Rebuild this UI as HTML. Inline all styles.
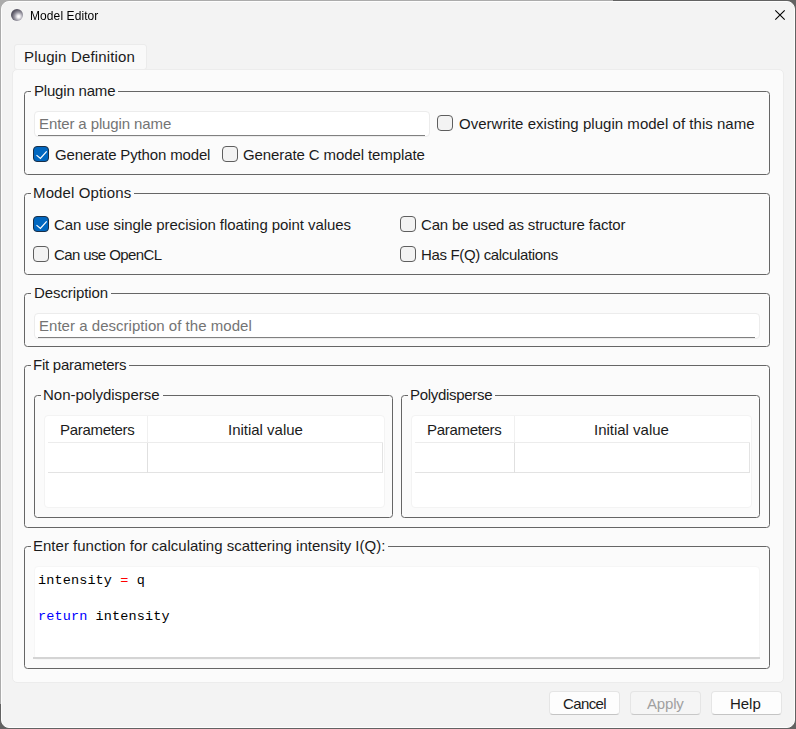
<!DOCTYPE html>
<html><head><meta charset="utf-8">
<style>
*{box-sizing:border-box;margin:0;padding:0}
html,body{width:796px;height:729px;overflow:hidden;background:#626262}
body{position:relative;font-family:"Liberation Sans",sans-serif;font-size:15px;color:#1b1b1b}
.a{position:absolute}
.t{position:absolute;white-space:nowrap;line-height:20px;font-size:15px}
#win{position:absolute;left:1px;top:1px;width:794px;height:727px;background:#f3f3f3;border-radius:8px;border:1px solid #fdfdfd}
#tab{left:14px;top:44px;width:133px;height:26px;background:#f9f9f9;border:1px solid #ebebeb;border-radius:3px}
#pane{left:12px;top:69px;width:772px;height:614px;background:#fbfbfb;border:1px solid #ececec;border-radius:5px}
.grp{position:absolute;border:1px solid #666666;border-radius:3.5px}
.gt{position:absolute;white-space:nowrap;line-height:20px;font-size:15px;background:#fbfbfb;padding:0 3px 0 3px}
.le{position:absolute;background:#fff;border:1px solid #ececec;border-radius:4px}
.ul{position:absolute;height:1px;background:#808080}
.ph{color:#747474}
.cb{position:absolute;width:16px;height:16px;border:1px solid #5e5e5e;border-radius:4px;background:#f3f3f3}
.cbc{position:absolute;width:16px;height:16px;border-radius:4px;background:#0067c0;border:1px solid #1a2f47}
.tbl{position:absolute;background:#fff;border:1px solid #f3f3f3;border-radius:4px}
.hl{position:absolute;height:1px;background:#e5e5e5}
.vl{position:absolute;width:1px;background:#e5e5e5}
.btn{position:absolute;height:24px;background:#fdfdfd;border:1px solid #e5e5e5;border-bottom-color:#c4c4c4;border-radius:4px;text-align:center;line-height:22px}
.mono{font-family:"Liberation Mono",monospace;font-size:13.5px;line-height:18px;color:#000;letter-spacing:0.13px}
</style></head>
<body>
<div class="a" style="left:0;top:0;width:613px;height:10px;background:#ababab"></div>
<div class="a" style="left:0;top:0;width:10px;height:704px;background:#ababab"></div>
<div id="win"></div>
<!-- title bar -->
<div class="a" style="left:11px;top:9px;width:12px;height:12px;border-radius:50%;background:radial-gradient(circle at 64% 63%,#ffffff 0%,#f0eef2 13%,#9c9aa5 38%,#5f5c6a 62%,#3a3746 92%)"></div>
<div class="t" style="left:30px;top:8px;font-size:12px;line-height:16px;color:#000;letter-spacing:0.09px;will-change:transform">Model Editor</div>
<svg class="a" style="left:770px;top:5px" width="20" height="20" viewBox="0 0 20 20"><path d="M5.3 5.3 L14.7 14.7 M14.7 5.3 L5.3 14.7" stroke="#000" stroke-width="1.1" fill="none"/></svg>

<div id="tab" class="a"></div>
<div class="t" style="left:24px;top:47px;letter-spacing:0.15px">Plugin Definition</div>
<div id="pane" class="a"></div>

<!-- Plugin name -->
<div class="grp" style="left:24px;top:91px;width:746px;height:84px"></div>
<div class="gt" style="left:31px;top:81px;padding-left:3px;letter-spacing:-0.19px">Plugin name</div>
<div class="le" style="left:34px;top:111px;width:396px;height:26px"></div>
<div class="ul" style="left:38px;top:135px;width:387px"></div>
<div class="t ph" style="left:39px;top:114px;letter-spacing:-0.11px">Enter a plugin name</div>
<div class="cb" style="left:437px;top:115px"></div>
<div class="t" style="left:459px;top:114px;letter-spacing:0.03px">Overwrite existing plugin model of this name</div>
<div class="cbc" style="left:33px;top:146px"></div><svg class="a" style="left:33px;top:146px" width="16" height="16" viewBox="0 0 16 16"><path d="M3.5 9.1 L7.4 12.4 L13.7 5.3" stroke="#fff" stroke-width="1.2" fill="none"/></svg>
<div class="t" style="left:55px;top:145px;letter-spacing:-0.15px">Generate Python model</div>
<div class="cb" style="left:222px;top:146px"></div>
<div class="t" style="left:243px;top:145px;letter-spacing:-0.1px">Generate C model template</div>

<!-- Model Options -->
<div class="grp" style="left:24px;top:193px;width:746px;height:82px"></div>
<div class="gt" style="left:31px;top:183px;padding-left:2px;letter-spacing:0.13px">Model Options</div>
<div class="cbc" style="left:33px;top:216px"></div><svg class="a" style="left:33px;top:216px" width="16" height="16" viewBox="0 0 16 16"><path d="M3.5 9.1 L7.4 12.4 L13.7 5.3" stroke="#fff" stroke-width="1.2" fill="none"/></svg>
<div class="t" style="left:54px;top:215px;letter-spacing:-0.07px">Can use single precision floating point values</div>
<div class="cb" style="left:33px;top:246px"></div>
<div class="t" style="left:54px;top:245px;letter-spacing:-0.61px">Can use OpenCL</div>
<div class="cb" style="left:400px;top:216px"></div>
<div class="t" style="left:421px;top:215px;letter-spacing:-0.16px">Can be used as structure factor</div>
<div class="cb" style="left:400px;top:246px"></div>
<div class="t" style="left:421px;top:245px;letter-spacing:-0.35px">Has F(Q) calculations</div>

<!-- Description -->
<div class="grp" style="left:24px;top:293px;width:746px;height:54px"></div>
<div class="gt" style="left:31px;top:283px;padding-left:3px;letter-spacing:-0.09px">Description</div>
<div class="le" style="left:34px;top:313px;width:726px;height:26px"></div>
<div class="ul" style="left:38px;top:337px;width:717px"></div>
<div class="t ph" style="left:39px;top:316px;letter-spacing:0.03px">Enter a description of the model</div>

<!-- Fit parameters -->
<div class="grp" style="left:24px;top:365px;width:746px;height:163px"></div>
<div class="gt" style="left:31px;top:355px;padding-left:2px;letter-spacing:-0.24px">Fit parameters</div>

<div class="grp" style="left:34px;top:395px;width:359px;height:123px"></div>
<div class="gt" style="left:41px;top:385px;padding-left:2px;letter-spacing:-0.01px">Non-polydisperse</div>
<div class="tbl" style="left:44px;top:415px;width:341px;height:93px"></div>
<div class="hl" style="left:48px;top:442px;width:335px;background:#ececec"></div>
<div class="hl" style="left:48px;top:472px;width:335px;background:#e3e3e3"></div>
<div class="vl" style="left:147px;top:416px;height:26px;background:#f0f0f0"></div>
<div class="vl" style="left:147px;top:443px;height:30px;background:#e0e0e0"></div>
<div class="vl" style="left:382px;top:443px;height:30px;background:#e3e3e3"></div>
<div class="t" style="left:60px;top:420px;letter-spacing:-0.31px">Parameters</div>
<div class="t" style="left:228px;top:420px;letter-spacing:-0.01px">Initial value</div>

<div class="grp" style="left:401px;top:395px;width:359px;height:123px"></div>
<div class="gt" style="left:408px;top:385px;padding-left:2px;letter-spacing:-0.3px">Polydisperse</div>
<div class="tbl" style="left:411px;top:415px;width:341px;height:93px"></div>
<div class="hl" style="left:415px;top:442px;width:335px;background:#ececec"></div>
<div class="hl" style="left:415px;top:472px;width:335px;background:#e3e3e3"></div>
<div class="vl" style="left:514px;top:416px;height:26px;background:#f0f0f0"></div>
<div class="vl" style="left:514px;top:443px;height:30px;background:#e0e0e0"></div>
<div class="vl" style="left:749px;top:443px;height:30px;background:#e3e3e3"></div>
<div class="t" style="left:427px;top:420px;letter-spacing:-0.31px">Parameters</div>
<div class="t" style="left:594px;top:420px;letter-spacing:-0.01px">Initial value</div>

<!-- function editor -->
<div class="grp" style="left:24px;top:546px;width:746px;height:123px"></div>
<div class="gt" style="left:31px;top:536px;padding-left:2px;letter-spacing:0.01px">Enter function for calculating scattering intensity I(Q):</div>
<div class="a" style="left:34px;top:566px;width:726px;height:94px;background:#fff;border:1px solid #f6f6f6;border-radius:4px"></div>
<div class="a" style="left:33px;top:657px;width:727px;height:2px;background:#d4d4d4"></div>
<div class="a mono" style="left:38px;top:572px">intensity <span style="color:#ff0000">=</span> q</div>
<div class="a mono" style="left:38px;top:608px"><span style="color:#0000ff">return</span> intensity</div>

<!-- buttons -->
<div class="btn" style="left:549px;top:691px;width:71px"></div>
<div class="t" style="left:563px;top:694px;letter-spacing:-0.6px">Cancel</div>
<div class="btn" style="left:630px;top:691px;width:71px;background:#f5f5f5;border-color:#e5e5e5 #e5e5e5 #c8c8c8"></div>
<div class="t" style="left:647px;top:694px;letter-spacing:-0.18px;color:#a0a0a0">Apply</div>
<div class="btn" style="left:711px;top:691px;width:71px"></div>
<div class="t" style="left:730px;top:694px;letter-spacing:-0.03px">Help</div>
</body></html>
